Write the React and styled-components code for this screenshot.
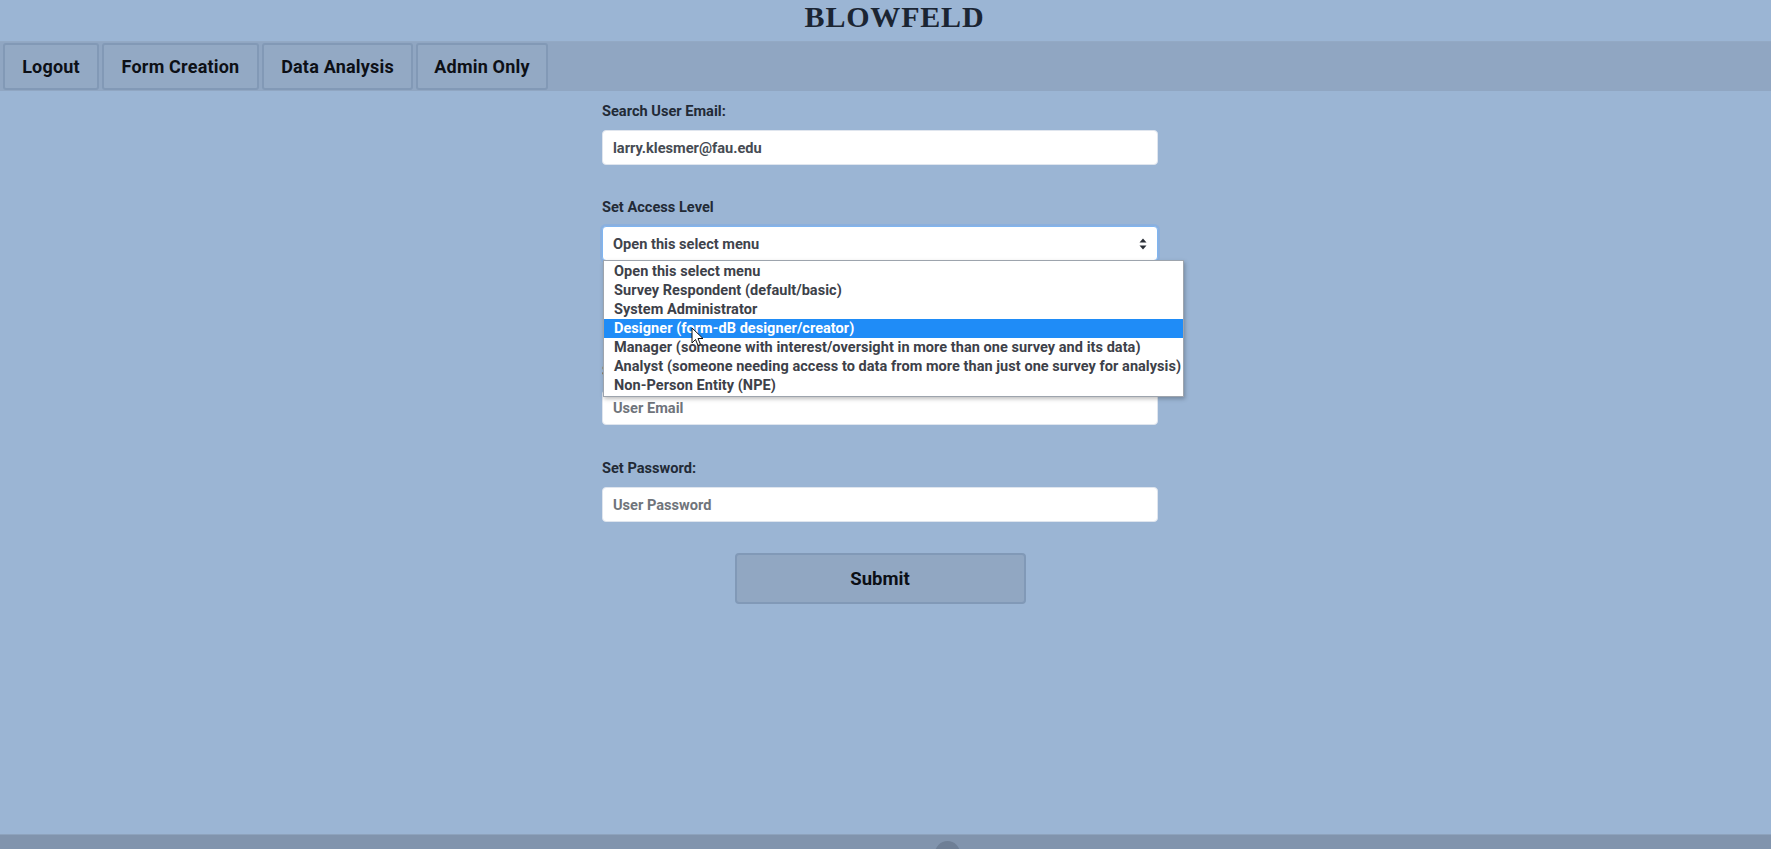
import React, { useState } from "react";
import styled, { createGlobalStyle } from "styled-components";

const GlobalStyle = createGlobalStyle`
  html, body {
    margin: 0;
    padding: 0;
    background-color: #9bb5d4;
  }
  * {
    box-sizing: border-box;
  }
`;

const Page = styled.div`
  display: flex;
  flex-direction: column;
  height: 100vh;
  font-family: Roboto, "Liberation Sans", sans-serif;
  overflow: hidden;
`;

const Header = styled.header`
  height: 41px;
  display: flex;
  justify-content: center;
  padding: 1px 0 0 18px;
`;

const Title = styled.h1`
  margin: 0;
  font-family: "Liberation Serif", "Times New Roman", serif;
  font-weight: 700;
  font-size: 30px;
  line-height: 31px;
  letter-spacing: 0.8px;
  color: #1b2533;
`;

const NavBar = styled.nav`
  height: 50px;
  display: flex;
  align-items: stretch;
  gap: 3px;
  padding: 1px 0 1px 3px;
  background-color: #90a6c2;
  border-top: 1px solid #93a9c4;
`;

const NavButton = styled.button`
  width: ${(props) => props.w}px;
  padding: 0;
  border: 2px solid #8299b6;
  border-radius: 3px;
  background-color: #93a9c4;
  color: #0d1016;
  font-family: Roboto, "Liberation Sans", sans-serif;
  font-weight: 700;
  font-size: 18px;
  letter-spacing: 0.2px;
  cursor: pointer;
`;

const Main = styled.main`
  flex: 1;
  display: flex;
  justify-content: center;
  padding: 10px 11px 0 0;
`;

const Form = styled.form`
  width: 556px;
  display: flex;
  flex-direction: column;
`;

const Group = styled.div`
  position: relative;
  margin-bottom: ${(props) => props.gap}px;
`;

const Label = styled.label`
  display: block;
  font-size: 14.6px;
  line-height: 20px;
  font-weight: 700;
  color: #222a36;
  margin-bottom: 9px;
`;

const Input = styled.input`
  display: block;
  width: 100%;
  height: 35px;
  padding: 0 10px;
  border: 1px solid #dfe5ee;
  border-radius: 4px;
  background: #ffffff;
  font-family: Roboto, "Liberation Sans", sans-serif;
  font-size: 14.6px;
  font-weight: 700;
  color: #464b53;
  outline: none;

  &::placeholder {
    color: #6f747b;
  }
`;

const SelectBox = styled.div`
  position: relative;
  height: 35px;
  display: flex;
  align-items: center;
  justify-content: space-between;
  padding: 0 10px;
  border: 1px solid #80b5f0;
  border-radius: 4px;
  background: #ffffff;
  box-shadow: 0 0 0 2px rgba(120, 170, 235, 0.45);
  font-size: 14.6px;
  font-weight: 700;
  color: #3f444c;
`;

const Options = styled.ul`
  position: absolute;
  top: 100%;
  left: 0;
  z-index: 5;
  min-width: 100%;
  width: max-content;
  margin: 0;
  padding: 1px 0;
  list-style: none;
  background: #ffffff;
  border: 1px solid #9da4ad;
  box-shadow: 1px 2px 4px rgba(0, 0, 0, 0.25);
`;

const Option = styled.li`
  height: 19px;
  line-height: 19px;
  padding: 0 2px 0 10px;
  font-size: 14.5px;
  letter-spacing: 0.05px;
  font-weight: 700;
  white-space: nowrap;
  color: ${(props) => (props.active ? "#ffffff" : "#3d4149")};
  background: ${(props) => (props.active ? "#1f8cf7" : "transparent")};
`;

const Pointer = styled.svg`
  position: absolute;
  left: 87px;
  top: 66px;
  z-index: 6;
`;

const SubmitRow = styled.div`
  display: flex;
  justify-content: center;
`;

const SubmitButton = styled.button`
  width: 291px;
  height: 51px;
  border: 2px solid #8199b7;
  border-radius: 4px;
  background-color: #91a7c2;
  color: #0c0f15;
  font-family: Roboto, "Liberation Sans", sans-serif;
  font-size: 18.5px;
  font-weight: 700;
  cursor: pointer;
`;

const Footer = styled.footer`
  position: relative;
  height: 15px;
  background-color: #8194ad;
  border-top: 1px solid #8ea3bd;
  overflow: hidden;
`;

const Knob = styled.span`
  position: absolute;
  left: 935px;
  top: 6px;
  width: 25px;
  height: 25px;
  border-radius: 50%;
  background-color: #6e7f96;
`;

const accessLevels = [
  "Open this select menu",
  "Survey Respondent (default/basic)",
  "System Administrator",
  "Designer (form-dB designer/creator)",
  "Manager (someone with interest/oversight in more than one survey and its data)",
  "Analyst (someone needing access to data from more than just one survey for analysis)",
  "Non-Person Entity (NPE)",
];

const navItems = [
  { label: "Logout", w: 96 },
  { label: "Form Creation", w: 157 },
  { label: "Data Analysis", w: 151 },
  { label: "Admin Only", w: 132 },
];

const App = () => {
  const [email, setEmail] = useState("larry.klesmer@fau.edu");
  const [active] = useState(3);

  return (
    <Page>
      <GlobalStyle />
      <Header>
        <Title>BLOWFELD</Title>
      </Header>
      <NavBar>
        {navItems.map((item) => (
          <NavButton key={item.label} w={item.w}>
            {item.label}
          </NavButton>
        ))}
      </NavBar>
      <Main>
        <Form onSubmit={(e) => e.preventDefault()}>
          <Group gap={32}>
            <Label>Search User Email:</Label>
            <Input value={email} onChange={(e) => setEmail(e.target.value)} />
          </Group>
          <Group gap={100}>
            <Label>Set Access Level</Label>
            <SelectBox>
              <span>{accessLevels[0]}</span>
              <svg width="8" height="12" viewBox="0 0 8 12">
                <path d="M4 0.5 L7.5 4.5 H0.5 Z" fill="#2b2f36" />
                <path d="M4 11.5 L7.5 7.5 H0.5 Z" fill="#2b2f36" />
              </svg>
              <Options>
                {accessLevels.map((level, i) => (
                  <Option key={level} active={i === active}>
                    {level}
                  </Option>
                ))}
                <Pointer width="13" height="20" viewBox="0 0 13 20">
                  <path
                    d="M1 1 L1 16 L4.5 12.5 L7 18.5 L9.5 17.5 L7 11.5 L12 11.5 Z"
                    fill="#ffffff"
                    stroke="#111111"
                    strokeWidth="1"
                  />
                </Pointer>
              </Options>
            </SelectBox>
          </Group>
          <Group gap={33}>
            <Label>Set User Email:</Label>
            <Input placeholder="User Email" />
          </Group>
          <Group gap={31}>
            <Label>Set Password:</Label>
            <Input placeholder="User Password" type="text" />
          </Group>
          <SubmitRow>
            <SubmitButton type="submit">Submit</SubmitButton>
          </SubmitRow>
        </Form>
      </Main>
      <Footer>
        <Knob />
      </Footer>
    </Page>
  );
};

export default App;
